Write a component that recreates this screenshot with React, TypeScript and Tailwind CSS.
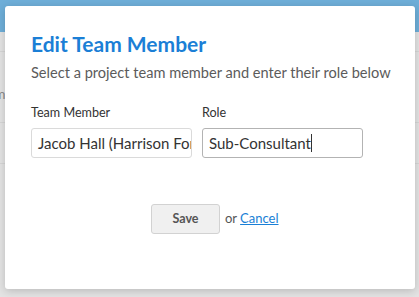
import React from "react";

export default function App() {
  return (
    <div className="relative w-[419px] h-[297px] overflow-hidden bg-[#e3e3e3]" style={{ fontFamily: "Lato, 'Open Sans', sans-serif" }}>
      {/* page behind */}
      <div className="h-[32px] bg-[#6eaed8]" />
      <div className="h-[20px] border-b border-[#d6d6d6]" />
      <div className="h-[71px] border-b border-[#d6d6d6]">
        <div className="pt-[34px] -ml-[6px] text-[14px] leading-[16px] text-[#8a8a8a]">m</div>
      </div>
      <div className="h-[41px] border-b border-[#d6d6d6]" />

      {/* modal */}
      <div className="absolute left-[5px] top-[6px] w-[410px] h-[283px] bg-white rounded-[3px] shadow-[0_2px_8px_rgba(0,0,0,0.18)] pl-[26px] pt-[26px]">
        <h2 className="text-[21px] leading-[24px] font-bold text-[#1b7fd6]">Edit Team Member</h2>
        <p className="mt-[7px] text-[14.6px] leading-[20px] text-[#5b5b5b]">Select a project team member and enter their role below</p>
        <div className="mt-[22px] flex gap-[10px]">
          <div className="flex flex-col w-[161px]">
            <label className="text-[12.6px] leading-[16px] text-[#333]">Team Member</label>
            <div className="mt-[7px] h-[30px] border border-[#dadada] rounded-[3px] pl-[6px] flex items-center overflow-hidden whitespace-nowrap text-[15px] text-[#333]">Jacob Hall (Harrison Ford)</div>
          </div>
          <div className="flex flex-col w-[161px]">
            <label className="text-[12.6px] leading-[16px] text-[#333]">Role</label>
            <div className="mt-[7px] h-[30px] border border-[#b3b3b3] rounded-[3px] pl-[6px] flex items-center text-[15px] text-[#333]">Sub-Consultant<span className="inline-block w-[1px] h-[18px] bg-[#333]" /></div>
          </div>
        </div>
        <div className="mt-[46px] flex items-center pl-[120px]">
          <button className="w-[69px] h-[30px] bg-[#f0f0f0] border border-[#d2d2d2] rounded-[3px] text-[12.5px] font-bold text-[#555]">Save</button>
          <span className="ml-[5px] text-[13px] text-[#555]">or</span>
          <a className="ml-[3px] text-[13px] text-[#1a7fd6] underline">Cancel</a>
        </div>
      </div>
    </div>
  );
}
